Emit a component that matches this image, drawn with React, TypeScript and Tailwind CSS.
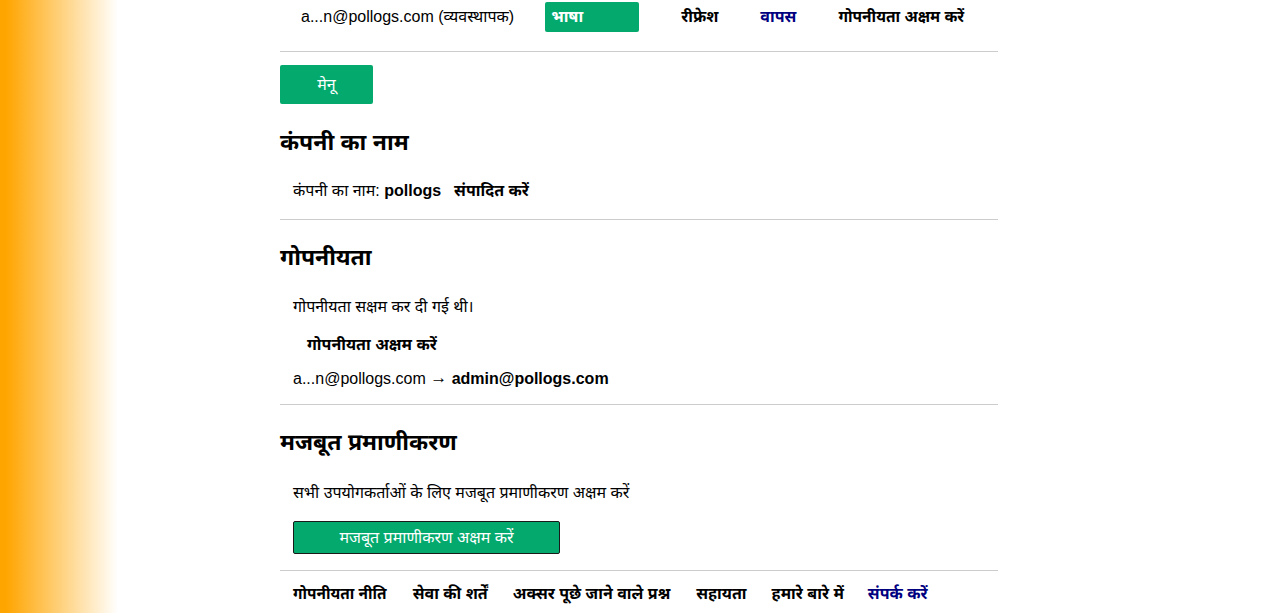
import React from 'react';

const green = 'bg-[#04aa6d]';

export default function App() {
  return (
    <div className="min-h-[613px] w-full bg-[linear-gradient(to_right,#ffa500_0px,#ffa500_6px,#ffffff_118px)] font-['Liberation_Sans','Noto_Sans',sans-serif] text-black">
      <div className="ml-[280px] w-[718px]">
        {/* top bar */}
        <div className="flex h-[34px] items-center text-[16px]">
          <span className="ml-[21px]">a...n@pollogs.com (व्यवस्थापक)</span>
          <button className={`ml-[31px] h-[30px] w-[94px] rounded-[2px] ${green} px-[6px] text-left font-bold text-white`}>
            भाषा
          </button>
          <a className="ml-[42px] font-bold">रीफ्रेश</a>
          <a className="ml-[42px] font-bold text-[#000080]">वापस</a>
          <a className="ml-[42px] text-[15.5px] font-bold">गोपनीयता अक्षम करें</a>
        </div>
        <hr className="mt-[17px] border-t border-[#cccccc]" />

        <button className={`mt-[13px] h-[39px] w-[93px] rounded-[2px] ${green} text-[16px] text-white`}>मेनू</button>

        {/* company */}
        <h2 className="mt-[22px] text-[23px] font-bold leading-[32px]">कंपनी का नाम</h2>
        <div className="mt-[21px] flex items-center pl-[13px] text-[16px] leading-[24px]">
          <span>कंपनी का नाम:&nbsp;</span>
          <b>pollogs</b>
          <a className="ml-[13px] font-bold">संपादित करें</a>
        </div>
        <hr className="mt-[16px] border-t border-[#cccccc]" />

        {/* privacy */}
        <h2 className="mt-[21px] text-[23px] font-bold leading-[32px]">गोपनीयता</h2>
        <p className="mt-[22px] pl-[13px] text-[16px] leading-[24px]">गोपनीयता सक्षम कर दी गई थी।</p>
        <p className="mt-[14px] pl-[27px] text-[16px] font-bold leading-[24px]">गोपनीयता अक्षम करें</p>
        <p className="mt-[10px] h-[24px] pl-[13px] text-[16px] leading-[24px]">
          a...n@pollogs.com{' '}
          <span className="font-['Noto_Sans',sans-serif] text-[17px] leading-none align-[1px]">→</span>{' '}
          <b>admin@pollogs.com</b>
        </p>
        <hr className="mt-[13px] border-t border-[#cccccc]" />

        {/* strong auth */}
        <h2 className="mt-[21px] text-[23px] font-bold leading-[32px]">मजबूत प्रमाणीकरण</h2>
        <p className="mt-[23px] pl-[13px] text-[16px] leading-[24px]">सभी उपयोगकर्ताओं के लिए मजबूत प्रमाणीकरण अक्षम करें</p>
        <div className="mt-[16px] pl-[13px]">
          <button className={`h-[33px] w-[267px] rounded-[2px] border border-[#1a1a1a] ${green} text-[16px] text-white`}>
            मजबूत प्रमाणीकरण अक्षम करें
          </button>
        </div>
        <hr className="mt-[16px] border-t border-[#cccccc]" />

        {/* footer */}
        <div className="mt-[11px] flex pl-[13px] text-[16px] font-bold leading-[24px]">
          <a className="text-[15.4px]">गोपनीयता नीति</a>
          <a className="ml-[26px]">सेवा की शर्तें</a>
          <a className="ml-[25px]">अक्सर पूछे जाने वाले प्रश्न</a>
          <a className="ml-[26px]">सहायता</a>
          <a className="ml-[25px]">हमारे बारे में</a>
          <a className="ml-[24px] text-[#000080]">संपर्क करें</a>
        </div>
      </div>
    </div>
  );
}
